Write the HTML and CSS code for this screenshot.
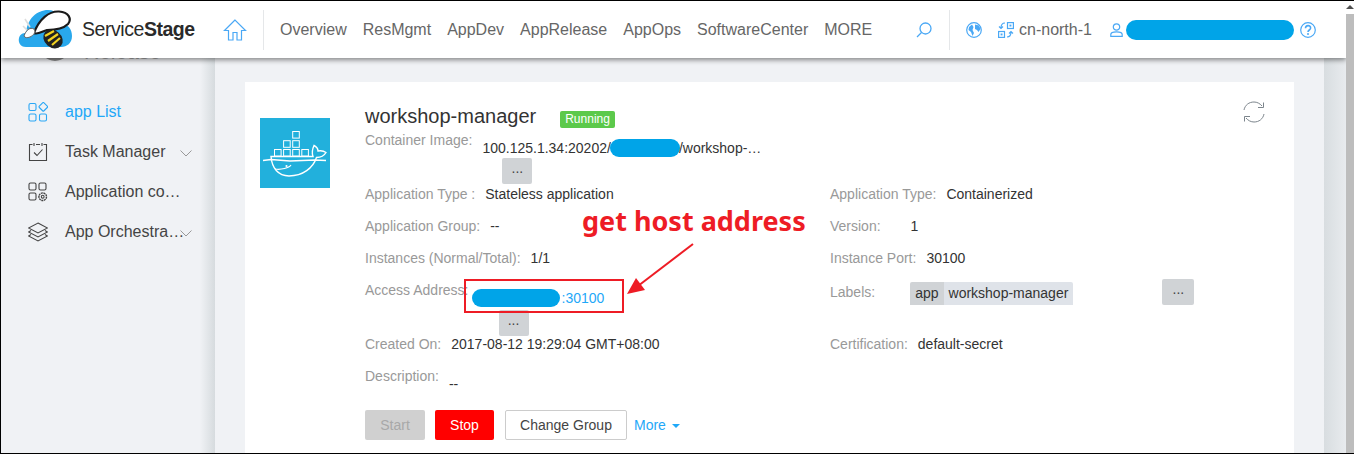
FILE: index.html
```html
<!DOCTYPE html>
<html lang="en">
<head>
    <meta charset="UTF-8">
    <meta name="viewport" content="width=device-width, initial-scale=1.0">
    <title>ServiceStage</title>
    <link rel="stylesheet" href="styles.css">
</head>
<body>
<div class="frame">
    <div class="page">
        <header class="topbar">
            <div class="logo">
                <svg width="65" height="50" viewBox="0 0 65 50">
                    <path d="M11 42 C5 42 3 37 4 33 C5 29 8 28 11 28 C12 14 22 5 33 5 C42 5 47 12 47 19 C53 19 57 24 57 31 C57 38 52 42 46 42 Z" fill="#29a8ec"/>
                    <path d="M19 28 C24 14 34 6 44 6.5 C54 7 57 14 53 19 C48 24 40 25 32 25 C26 27 22 30 19 28 Z" fill="#fff" stroke="#1a1a1a" stroke-width="2.2"/>
                    <path d="M10 14 L15 22 M8 21 L13 26" stroke="#ddd" stroke-width="1.6"/>
                    <path d="M9 31 C11 25 15 22 19 24 C21 27 19 30 15 32 C12 33 10 33 9 31 Z" fill="#fff" stroke="#666" stroke-width="1"/>
                    <ellipse cx="38" cy="34" rx="10.5" ry="8.5" fill="#222" transform="rotate(40 38 34)"/>
                    <path d="M30 31 L39 26 M33 36 L43 29 M37 40 L45 33" stroke="#f3d320" stroke-width="2.2"/>
                </svg>
                <span class="brand">Service<b>Stage</b></span>
            </div>
            <svg class="home-icon" width="24" height="24" viewBox="0 0 24 24" fill="none" stroke="#4aa8f5" stroke-width="1.2">
                <path d="M12 2 L1.5 12.5 L5.5 12.5 L5.5 22 L10 22 L10 14.5 L14 14.5 L14 22 L18.5 22 L18.5 12.5 L22.5 12.5 Z"/>
            </svg>
            <span class="bar-divider"></span>
            <nav class="main-nav">
                <a>Overview</a>
                <a>ResMgmt</a>
                <a>AppDev</a>
                <a>AppRelease</a>
                <a>AppOps</a>
                <a>SoftwareCenter</a>
                <a>MORE</a>
            </nav>
            <svg class="search-icon" width="16" height="16" viewBox="0 0 16 16" fill="none" stroke="#4aa8f5" stroke-width="1.3">
                <circle cx="9.5" cy="6.5" r="5.5"/>
                <path d="M5.5 10.5 L1 15"/>
            </svg>
            <span class="bar-divider right-divider"></span>
            <svg class="globe-icon" width="16" height="16" viewBox="0 0 16 16">
                <circle cx="8" cy="8" r="7.3" fill="none" stroke="#4aa8f5" stroke-width="1.2"/>
                <path d="M3 5 L6 2.5 L7.5 5 L6.5 8 L8 11 L6.5 14 L5 10 L2.5 8 Z M9 2.5 L13 3.5 L14.5 7 L12.5 10 L11 8 L9 7 Z" fill="#4aa8f5"/>
            </svg>
            <svg class="region-icon" width="16" height="16" viewBox="0 0 16 16" fill="none" stroke="#4aa8f5" stroke-width="1.2">
                <rect x="9.5" y="0.6" width="5.9" height="5.9"/>
                <rect x="11.5" y="2.6" width="1.9" height="1.9" fill="#4aa8f5" stroke="none"/>
                <rect x="0.6" y="9.5" width="5.9" height="5.9"/>
                <rect x="2.6" y="11.5" width="1.9" height="1.9" fill="#4aa8f5" stroke="none"/>
                <path d="M7 1 C4 1 3 3 3 6 M1 4.5 L3 6.5 L5 4.5 M9 15 C12 15 13 13 13 10 M11 11.5 L13 9.5 L15 11.5"/>
            </svg>
            <span class="region-name">cn-north-1</span>
            <svg class="user-icon" width="13" height="14" viewBox="0 0 13 14" fill="none" stroke="#4aa8f5" stroke-width="1.2">
                <circle cx="6.5" cy="4" r="3.2"/>
                <path d="M0.8 13.4 L0.8 11.5 C0.8 9.5 3 8.8 6.5 8.8 C10 8.8 12.2 9.5 12.2 11.5 L12.2 13.4 Z"/>
            </svg>
            <span class="blob user-blob"></span>
            <svg class="help-icon" width="16" height="16" viewBox="0 0 16 16" fill="none" stroke="#4aa8f5" stroke-width="1.2">
                <circle cx="8" cy="8" r="7.3"/>
                <path d="M5.5 6.2 C5.5 2.8 10.6 2.8 10.6 6 C10.6 8 8 8 8 10" stroke-width="1.6"/>
                <circle cx="8" cy="12" r="1" fill="#4aa8f5" stroke="none"/>
            </svg>
        </header>

        <div class="content">
            <aside class="sidebar">
                <div class="release-title">
                    <span class="release-arc"></span>
                    <span class="release-text">Release</span>
                </div>
                <ul class="side-menu">
                    <li class="active">
                        <svg width="20" height="20" viewBox="0 0 20 20" fill="none" stroke="#2aa7f5" stroke-width="1.1">
                            <rect x="1" y="1.5" width="7" height="7" rx="1.5"/>
                            <rect x="12" y="1.5" width="6.6" height="6.6" rx="1" transform="rotate(45 15.3 4.8)"/>
                            <rect x="1" y="12" width="7" height="7" rx="1.5"/>
                            <rect x="11.5" y="12" width="7" height="7" rx="1.5"/>
                        </svg>
                        <span class="side-label">app List</span>
                    </li>
                    <li>
                        <svg width="20" height="20" viewBox="0 0 20 20" fill="none" stroke="#444" stroke-width="1.1">
                            <path d="M4.5 2.5 L1.5 2.5 L1.5 18.5 L18.5 18.5 L18.5 2.5 L15.5 2.5 M8 2.5 L12 2.5 M6 1 L6 4 M14 1 L14 4"/>
                            <path d="M6 10.5 L9 13.5 L14.5 7.5"/>
                        </svg>
                        <span class="side-label">Task Manager</span>
                        <svg class="chevron" width="12" height="7" viewBox="0 0 12 7" fill="none" stroke="#999" stroke-width="1"><path d="M0.5 0.5 L6 6 L11.5 0.5"/></svg>
                    </li>
                    <li>
                        <svg width="20" height="20" viewBox="0 0 20 20" fill="none" stroke="#444" stroke-width="1.1">
                            <rect x="1" y="1" width="7" height="7" rx="1.5"/>
                            <rect x="11" y="1" width="7" height="7" rx="1.5"/>
                            <rect x="1" y="11" width="7" height="7" rx="1.5"/>
                            <circle cx="14.7" cy="14.7" r="3.8" stroke-dasharray="2 0.6" stroke-width="1.4"/>
                            <circle cx="14.7" cy="14.7" r="1.4"/>
                        </svg>
                        <span class="side-label">Application co…</span>
                    </li>
                    <li>
                        <svg width="20" height="20" viewBox="0 0 20 20" fill="none" stroke="#444" stroke-width="1.1">
                            <path d="M10 1 L19.5 6 L10 11 L0.5 6 Z"/>
                            <path d="M3 8.5 L0.5 10 L10 15 L19.5 10 L17 8.5"/>
                            <path d="M3 12.5 L0.5 14 L10 19 L19.5 14 L17 12.5"/>
                        </svg>
                        <span class="side-label">App Orchestra…</span>
                        <svg class="chevron" width="12" height="7" viewBox="0 0 12 7" fill="none" stroke="#999" stroke-width="1"><path d="M0.5 0.5 L6 6 L11.5 0.5"/></svg>
                    </li>
                </ul>
            </aside>

            <main class="main">
                <section class="card">
                    <div class="docker-logo">
                        <svg width="70" height="70" viewBox="0 0 70 70" fill="none" stroke="#fff" stroke-width="1">
                            <rect x="32.7" y="13.5" width="6.6" height="6.6"/>
                            <rect x="23.6" y="22.7" width="6.6" height="6.6"/>
                            <rect x="32.7" y="22.7" width="6.6" height="6.6"/>
                            <rect x="14.5" y="31.5" width="6.6" height="6.6"/>
                            <rect x="23.6" y="31.5" width="6.6" height="6.6"/>
                            <rect x="32.7" y="31.5" width="6.6" height="6.6"/>
                            <rect x="41.8" y="31.5" width="6.6" height="6.6"/>
                            <path d="M11 38.5 L53 38.5 C52 36 52 32 54 27.5 C57 29 58 31 58 33 C61 32.5 64 33 66 34.5 C64 38 60 39.5 56.5 39.5 C53 50 43 58 29 58 C18 58 12 50 11 38.5 Z" stroke-width="1.4"/>
                            <path d="M3 42.5 L11 41.5 L30 43 L55 42 L66 42.5" stroke-width="1.3"/>
                            <path d="M15 51 C21 52 29 50 31 47" stroke-width="1.2"/>
                            <circle cx="26.5" cy="48" r="1.1" fill="#fff" stroke="none"/>
                        </svg>
                    </div>

                    <div class="detail">
                        <div class="title-row">
                            <h1>workshop-manager</h1>
                            <span class="status">Running</span>
                        </div>
                        <div class="refresh">
                            <svg width="24" height="22" viewBox="0 0 24 22" fill="none" stroke="#7c858c" stroke-width="1">
                                <path d="M2 9 C3 4 7 1 12 1 C15 1 18 2.5 20 5 M22 13 C21 18 17 21 12 21 C9 21 6 19.5 4 17"/>
                                <path d="M21.5 1.5 L21.5 6.5 L16 6.5 M2.5 20.5 L2.5 15.5 L8 15.5"/>
                            </svg>
                        </div>

                        <div class="image-row">
                            <span class="label">Container Image:</span>
                            <div class="image-value">
                                <div class="image-text">100.125.1.34:20202/<span class="blob image-blob"></span>/workshop-…</div>
                                <button class="more-btn image-more">...</button>
                            </div>
                        </div>

                        <div class="fields">
                            <div class="field"><span class="label">Application Type :</span><span class="value">Stateless application</span></div>
                            <div class="field"><span class="label">Application Type:</span><span class="value">Containerized</span></div>
                            <div class="field"><span class="label">Application Group:</span><span class="value">--</span></div>
                            <div class="field"><span class="label">Version:</span><span class="value version">1</span></div>
                            <div class="field"><span class="label">Instances (Normal/Total):</span><span class="value">1/1</span></div>
                            <div class="field"><span class="label">Instance Port:</span><span class="value">30100</span></div>
                            <div class="field">
                                <span class="label">Access Address:</span>
                                <div class="access">
                                    <a class="access-link"><span class="blob access-blob"></span>:30100</a>
                                    <button class="more-btn access-more">...</button>
                                </div>
                            </div>
                            <div class="field field-labels">
                                <span class="label">Labels:</span>
                                <div class="tags">
                                    <span class="tag-key">app</span><span class="tag-val">workshop-manager</span>
                                </div>
                                <button class="more-btn tags-more">...</button>
                            </div>
                            <div class="field"><span class="label">Created On:</span><span class="value">2017-08-12 19:29:04 GMT+08:00</span></div>
                            <div class="field"><span class="label">Certification:</span><span class="value">default-secret</span></div>
                            <div class="field"><span class="label">Description:</span><span class="value desc">--</span></div>
                        </div>

                        <div class="actions">
                            <button class="btn btn-start">Start</button>
                            <button class="btn btn-stop">Stop</button>
                            <button class="btn btn-group">Change Group</button>
                            <a class="more-link">More <span class="caret"></span></a>
                        </div>
                    </div>
                </section>
            </main>
            <div class="main-edge"></div>
        </div>

        <div class="note-text">get host address</div>
        <div class="note-box"></div>
        <svg class="note-arrow" width="80" height="60" viewBox="0 0 80 60">
            <path d="M67 1 L12 43" stroke="#ee1c25" stroke-width="2"/>
            <path d="M1 51 L19 47 L10 35 Z" fill="#ee1c25"/>
        </svg>
    </div>
    <div class="scrollbar"><span class="scroll-up"></span><span class="scroll-thumb"></span></div>
</div>
</body>
</html>
```

FILE: styles.css
```css
* {
    box-sizing: border-box;
}
html, body {
    margin: 0;
    height: 100%;
    overflow: hidden;
}
body {
    font-family: "Liberation Sans", Arial, sans-serif;
    font-size: 14px;
    color: #333;
    background: #fff;
}
.frame {
    display: flex;
    height: 454px;
    border-top: 1px solid #000;
    border-bottom: 1px solid #000;
    border-left: 1px solid #000;
}
.page {
    position: relative;
    flex: 1;
    display: flex;
    flex-direction: column;
    min-width: 0;
    overflow: hidden;
}
.scrollbar {
    width: 8px;
    display: flex;
    flex-direction: column;
    background: #fff;
}
.scroll-up {
    height: 13px;
    position: relative;
}
.scroll-up::after {
    content: "";
    position: absolute;
    left: 0;
    top: 4px;
    border-left: 4px solid transparent;
    border-right: 4px solid transparent;
    border-bottom: 4px solid #505050;
}
.scroll-thumb {
    flex: 1;
    background: #bdbdbd;
}

/* top bar */
.topbar {
    position: relative;
    z-index: 2;
    height: 57px;
    flex: none;
    display: flex;
    align-items: center;
    background: #fff;
    box-shadow: 0 2px 5px rgba(0, 0, 0, 0.45);
}
.logo {
    display: flex;
    align-items: center;
    flex: none;
    width: 222px;
    padding-left: 14px;
}
.brand {
    margin-left: 2px;
    font-size: 19.5px;
    letter-spacing: -0.45px;
    color: #2a2a2a;
}
.home-icon {
    flex: none;
}
.bar-divider {
    width: 1px;
    height: 40px;
    margin-left: 16px;
    background: #e5e7e9;
}
.main-nav {
    display: flex;
    gap: 16px;
    margin-left: 16px;
    width: 636px;
    font-size: 16px;
    color: #666;
}
.right-divider {
    margin-left: 17px;
}
.globe-icon {
    margin-left: 16px;
}
.region-icon {
    margin-left: 16px;
}
.region-name {
    margin-left: 5px;
    font-size: 16px;
    color: #666;
}
.user-icon {
    margin-left: 18px;
}
.blob {
    display: inline-block;
    background: #00a4e8;
    border-radius: 10px;
}
.user-blob {
    width: 168px;
    height: 20px;
    margin-left: 3px;
}
.help-icon {
    margin-left: 6px;
}

/* body area */
.content {
    flex: 1;
    display: flex;
    min-height: 0;
    background: #f0f2f5;
}
.sidebar {
    position: relative;
    width: 214px;
    flex: none;
    background: linear-gradient(to right, #f0f2f5 199px, #d6dbde 214px);
}
.release-title {
    position: absolute;
    left: 39px;
    top: -27px;
    display: flex;
    align-items: flex-start;
    gap: 14px;
}
.release-arc {
    width: 30px;
    height: 30px;
    border-radius: 50%;
    border: 3px solid #8a8a8a;
}
.release-text {
    margin-top: 9px;
    font-size: 21px;
    color: #aaa;
}
.side-menu {
    list-style: none;
    margin: 0;
    padding: 34px 0 0 27px;
}
.side-menu li {
    display: flex;
    align-items: center;
    height: 40px;
    font-size: 16px;
    color: #444;
}
.side-menu li.active {
    color: #1fa8f8;
}
.side-label {
    width: 118px;
    margin-left: 17px;
    white-space: nowrap;
}
.chevron {
    margin-left: -3px;
    margin-top: 3px;
}
.main {
    flex: 1;
    min-width: 0;
    padding: 24px 30px 0 30px;
}
.main-edge {
    width: 22px;
    flex: none;
    background: linear-gradient(to right, #d8dde0, #e8ebee);
}
.card {
    display: flex;
    height: 100%;
    padding: 36px 0 0 15px;
    background: #fff;
}
.docker-logo {
    width: 70px;
    height: 70px;
    flex: none;
    background: #22b0dc;
}
.docker-logo svg {
    display: block;
}
.detail {
    position: relative;
    flex: 1;
    margin-left: 35px;
    margin-top: -36px;
}
.title-row {
    display: flex;
    align-items: center;
    padding-top: 21px;
    height: 47px;
}
.title-row h1 {
    margin: 0;
    font-size: 20px;
    font-weight: normal;
}
.status {
    margin: 7px 0 0 24px;
    padding: 0 5px;
    height: 17px;
    line-height: 17px;
    border-radius: 2px;
    font-size: 12px;
    color: #fff;
    background: #5cc94b;
}
.refresh {
    position: absolute;
    top: 19px;
    right: 28px;
}
.label {
    color: #999;
    white-space: nowrap;
}
.value {
    margin-left: 10px;
}
.image-row {
    display: flex;
    height: 53px;
    margin-top: 3px;
}
.image-value {
    margin-left: 10px;
    padding-top: 8px;
}
.image-text {
    display: flex;
    align-items: center;
    height: 16px;
}
.image-blob {
    width: 70px;
    height: 18px;
    margin: 0 -1px 0 -1px;
}
.more-btn {
    display: block;
    height: 26px;
    padding: 0 0 6px;
    border: none;
    border-radius: 2px;
    font: 14px "Liberation Sans", Arial, sans-serif;
    color: #444;
    background: #d0d3d6;
}
.image-more {
    width: 30px;
    margin: 2px 0 0 20px;
}
.fields {
    display: grid;
    grid-template-columns: 465px 1fr;
    grid-template-rows: 32px 32px 32px 54px 32px 32px;
}
.field {
    display: flex;
    padding-top: 1px;
}
.version {
    margin-left: 30px;
}
.access {
    margin-left: 3px;
    padding-top: 8px;
}
.access-link {
    display: flex;
    align-items: center;
    height: 16px;
    color: #1fa8f8;
}
.access-blob {
    width: 88px;
    height: 18px;
    margin-right: 2px;
}
.access-more {
    width: 30px;
    margin: 4px 0 0 27px;
}
.field-labels {
    padding-top: 3px;
}
.tags {
    display: flex;
    height: 23px;
    margin: -2px 0 0 35px;
    line-height: 23px;
}
.tag-key {
    padding: 0 5px;
    background: #d0d3d6;
    border-radius: 2px 0 0 0;
}
.tag-val {
    padding: 0 5px;
    background: #dfe3e9;
    border-radius: 0 2px 0 0;
}
.tags-more {
    width: 32px;
    margin: -5px 0 0 89px;
}
.desc {
    margin: 8px 0 0 10px;
}
.actions {
    display: flex;
    align-items: center;
    gap: 10px;
    margin-top: 11px;
}
.btn {
    height: 30px;
    border: none;
    border-radius: 2px;
    font: 14px "Liberation Sans", Arial, sans-serif;
}
.btn-start {
    width: 60px;
    color: #a8a8a8;
    background: #d0d0d0;
}
.btn-stop {
    width: 59px;
    color: #fff;
    background: #f00;
}
.btn-group {
    width: 122px;
    margin-left: 1px;
    color: #444;
    background: #fff;
    border: 1px solid #ccc;
}
.more-link {
    margin-left: -3px;
    color: #1fa8f8;
}
.caret {
    display: inline-block;
    margin-left: 2px;
    vertical-align: middle;
    border-left: 4px solid transparent;
    border-right: 4px solid transparent;
    border-top: 4px solid #1fa8f8;
}

/* red marks drawn over the screen */
.note-text {
    position: absolute;
    left: 581px;
    top: 202px;
    font-family: "Noto Sans", sans-serif;
    font-size: 27px;
    line-height: 36px;
    font-weight: bold;
    white-space: nowrap;
    color: #ee1c25;
}
.note-box {
    position: absolute;
    left: 463px;
    top: 278px;
    width: 160px;
    height: 34px;
    border: 2px solid #ee1c25;
}
.note-arrow {
    position: absolute;
    left: 625px;
    top: 242px;
}
```
